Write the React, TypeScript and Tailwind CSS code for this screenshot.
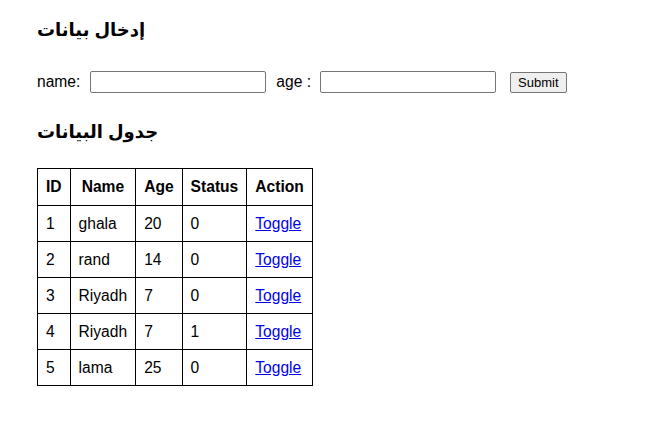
import React, { useState } from 'react';

type Row = { id: number; name: string; age: number; status: number };

const initialRows: Row[] = [
    { id: 1, name: 'ghala', age: 20, status: 0 },
    { id: 2, name: 'rand', age: 14, status: 0 },
    { id: 3, name: 'Riyadh', age: 7, status: 0 },
    { id: 4, name: 'Riyadh', age: 7, status: 1 },
    { id: 5, name: 'lama', age: 25, status: 0 },
];

const App = () => {
    const [rows, setRows] = useState<Row[]>(initialRows);
    const [name, setName] = useState('');
    const [age, setAge] = useState('');

    const handleSubmit = (e: React.FormEvent<HTMLFormElement>) => {
        e.preventDefault();
        if (!name || !age) return;
        setRows([...rows, { id: rows.length + 1, name, age: Number(age), status: 0 }]);
        setName('');
        setAge('');
    };

    const toggle = (id: number) => {
        setRows(rows.map((r) => (r.id === id ? { ...r, status: r.status ? 0 : 1 } : r)));
    };

    return (
        <div className="min-h-screen bg-white px-[37px] pt-[18px] text-black font-['Liberation_Sans','DejaVu_Sans',Arial,sans-serif] text-[15.6px]">
            <h1 className="text-[18px] leading-[24px] font-bold">إدخال بيانات</h1>

            <form onSubmit={handleSubmit} className="mt-[28px] flex h-[24px] items-center">
                <label htmlFor="name">name:</label>
                <input
                    id="name"
                    type="text"
                    value={name}
                    onChange={(e) => setName(e.target.value)}
                    className="ml-[10px] h-[22px] w-[176px] rounded-[2px] border border-[#767676] px-[2px] text-[13px]"
                />
                <label htmlFor="age" className="ml-[10px]">age :</label>
                <input
                    id="age"
                    type="text"
                    value={age}
                    onChange={(e) => setAge(e.target.value)}
                    className="ml-[9px] h-[22px] w-[176px] rounded-[2px] border border-[#767676] px-[2px] text-[13px]"
                />
                <button
                    type="submit"
                    className="ml-[14px] h-[21px] rounded-[2px] border border-[#767676] bg-[#efefef] px-[7px] text-[13px] leading-[15px]"
                >
                    Submit
                </button>
            </form>

            <h2 className="mt-[26px] text-[18px] leading-[24px] font-bold">جدول البيانات</h2>

            <table className="mt-[24px] border-collapse border border-black">
                <thead>
                    <tr className="h-[37px]">
                        {['ID', 'Name', 'Age', 'Status', 'Action'].map((h) => (
                            <th key={h} className="border border-black px-[8px] font-bold">{h}</th>
                        ))}
                    </tr>
                </thead>
                <tbody>
                    {rows.map((r) => (
                        <tr key={r.id} className="h-[36px]">
                            <td className="border border-black px-[8px]">{r.id}</td>
                            <td className="border border-black px-[8px]">{r.name}</td>
                            <td className="border border-black px-[8px]">{r.age}</td>
                            <td className="border border-black px-[8px]">{r.status}</td>
                            <td className="border border-black px-[8px]">
                                <a
                                    href="#"
                                    onClick={(e) => { e.preventDefault(); toggle(r.id); }}
                                    className="text-[#0000ee] underline"
                                >
                                    Toggle
                                </a>
                            </td>
                        </tr>
                    ))}
                </tbody>
            </table>
        </div>
    );
};

export default App;
